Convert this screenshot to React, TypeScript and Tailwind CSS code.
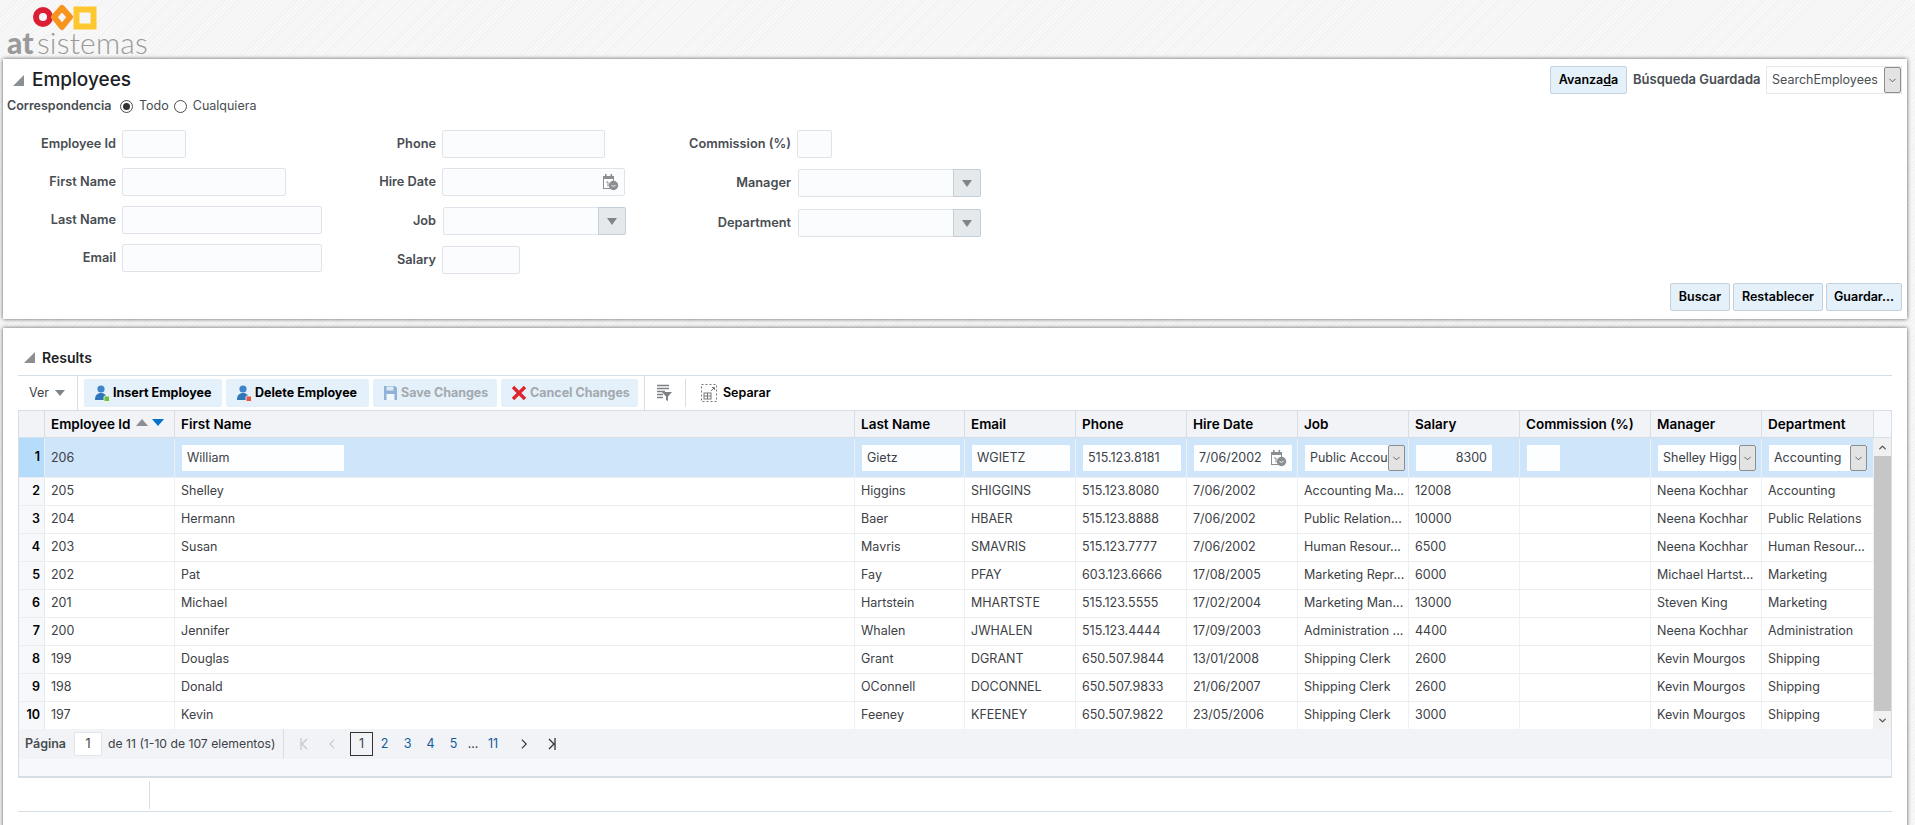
import { ChevronDown, ChevronUp } from 'lucide-react';

const rows = [
  ['205', 'Shelley', 'Higgins', 'SHIGGINS', '515.123.8080', '7/06/2002', 'Accounting Ma...', '12008', '', 'Neena Kochhar', 'Accounting'],
  ['204', 'Hermann', 'Baer', 'HBAER', '515.123.8888', '7/06/2002', 'Public Relation...', '10000', '', 'Neena Kochhar', 'Public Relations'],
  ['203', 'Susan', 'Mavris', 'SMAVRIS', '515.123.7777', '7/06/2002', 'Human Resour...', '6500', '', 'Neena Kochhar', 'Human Resour...'],
  ['202', 'Pat', 'Fay', 'PFAY', '603.123.6666', '17/08/2005', 'Marketing Repr...', '6000', '', 'Michael Hartst...', 'Marketing'],
  ['201', 'Michael', 'Hartstein', 'MHARTSTE', '515.123.5555', '17/02/2004', 'Marketing Man...', '13000', '', 'Steven King', 'Marketing'],
  ['200', 'Jennifer', 'Whalen', 'JWHALEN', '515.123.4444', '17/09/2003', 'Administration ...', '4400', '', 'Neena Kochhar', 'Administration'],
  ['199', 'Douglas', 'Grant', 'DGRANT', '650.507.9844', '13/01/2008', 'Shipping Clerk', '2600', '', 'Kevin Mourgos', 'Shipping'],
  ['198', 'Donald', 'OConnell', 'DOCONNEL', '650.507.9833', '21/06/2007', 'Shipping Clerk', '2600', '', 'Kevin Mourgos', 'Shipping'],
  ['197', 'Kevin', 'Feeney', 'KFEENEY', '650.507.9822', '23/05/2006', 'Shipping Clerk', '3000', '', 'Kevin Mourgos', 'Shipping'],
];

const headers = ['Employee Id', 'First Name', 'Last Name', 'Email', 'Phone', 'Hire Date', 'Job', 'Salary', 'Commission (%)', 'Manager', 'Department'];

const gridCols = 'grid grid-cols-[26px_130px_680px_110px_111px_111px_111px_111px_111px_131px_111px_112px]';

function Logo() {
  return (
    <div className="h-[59px] pl-[7px] pt-[4px]">
      <svg width="100" height="30" viewBox="0 0 100 30" className="ml-[24px] block">
        <circle cx="12" cy="13" r="7" fill="none" stroke="#dc1e35" strokeWidth="6" />
        <path d="M31 4 L39 13 L31 23 L23 13 Z" fill="none" stroke="#f7941d" strokeWidth="6" strokeLinejoin="round" />
        <rect x="45.5" y="5.5" width="17" height="17" fill="none" stroke="#fdc82f" strokeWidth="6" />
      </svg>
      <div className="font-['Lato',sans-serif] text-[30px] leading-[24px] text-[#9a9a9a] -mt-[4px] tracking-[0.2px] whitespace-nowrap">
        <span className="font-black">at</span>
        <span className="font-light ml-[3px]">sistemas</span>
      </div>
    </div>
  );
}

function TextBox({ width, icon }: { width: string; icon?: boolean }) {
  return (
    <div className={`${width} h-[28px] bg-[#fbfcfe] border border-[#dfe4ea] rounded-[2px] flex items-center justify-end pr-[5px]`}>
      {icon && <CalendarIcon />}
    </div>
  );
}

function CalendarIcon() {
  return (
    <svg width="17" height="18" viewBox="0 0 17 18">
      <rect x="1.5" y="3.5" width="10" height="12" fill="#fff" stroke="#8a8f94" />
      <rect x="1" y="3" width="11" height="3" fill="#8a8f94" />
      <rect x="3" y="1" width="1.6" height="3" fill="#8a8f94" />
      <rect x="8.5" y="1" width="1.6" height="3" fill="#8a8f94" />
      <path d="M4 9h2v4.5" fill="none" stroke="#8a8f94" />
      <circle cx="11.5" cy="12.5" r="4.7" fill="#8a8f94" />
      <path d="M9.5 12.5l2 .8 2-1" fill="none" stroke="#fff" strokeWidth="0.9" />
    </svg>
  );
}

function Combo({ width = 'w-[183px]' }: { width?: string }) {
  return (
    <div className={`${width} h-[28px] bg-[#fbfcfe] border border-[#dfe4ea] rounded-[2px] flex justify-end`}>
      <div className="w-[28px] -my-px -mr-px bg-[#e6e9ec] border border-[#c4ced7] rounded-r-[2px] flex items-center justify-center">
        <div className="w-0 h-0 border-l-[5px] border-r-[5px] border-t-[7px] border-l-transparent border-r-transparent border-t-[#7e858b]" />
      </div>
    </div>
  );
}

function Field({ label, labelWidth, children, className = '' }: { label: string; labelWidth: string; children: React.ReactNode; className?: string }) {
  return (
    <div className={`flex items-center gap-[6px] ${className}`}>
      <label className={`${labelWidth} text-right font-semibold text-[12.75px] text-[#484d52] whitespace-nowrap`}>{label}</label>
      {children}
    </div>
  );
}

function Radio({ checked }: { checked?: boolean }) {
  return (
    <span className="w-[13px] h-[13px] rounded-full border border-[#4a4a4a] bg-white flex items-center justify-center">
      {checked && <span className="w-[7px] h-[7px] rounded-full bg-[#333]" />}
    </span>
  );
}

function PanelButton({ width, children }: { width: string; children: React.ReactNode }) {
  return (
    <button className={`${width} h-[28px] bg-[#e4f0fa] border border-[#c4d0da] rounded-[2px] font-semibold text-[12.5px] text-black`}>
      {children}
    </button>
  );
}

function UserIcon({ badge }: { badge: string }) {
  return (
    <svg width="16" height="18" viewBox="0 0 16 18" className="shrink-0">
      <circle cx="7" cy="5" r="3.6" fill="#3f86c9" />
      <path d="M1 16c0-5 2.5-7 6-7s6 2 6 7z" fill="#2f75b8" />
      <rect x="10" y="12" width="5.5" height="5.5" rx="1" fill={badge} stroke="#fff" strokeWidth="0.8" />
    </svg>
  );
}

function SaveIcon() {
  return (
    <svg width="15" height="16" viewBox="0 0 15 16" className="shrink-0">
      <path d="M1 1h11l2 2v12H1z" fill="#8fb2d8" />
      <rect x="3.5" y="1.5" width="7" height="4" fill="#dfe9f3" />
      <rect x="3.5" y="9" width="8" height="6" fill="#f2f6fa" />
    </svg>
  );
}

function CancelIcon() {
  return (
    <svg width="16" height="16" viewBox="0 0 16 16" className="shrink-0">
      <path d="M2 2l12 12M14 2L2 14" stroke="#e0262d" strokeWidth="3.4" />
    </svg>
  );
}

function ToolButton({ width, disabled, icon, children }: { width: string; disabled?: boolean; icon: React.ReactNode; children: React.ReactNode }) {
  return (
    <button className={`${width} h-[28px] bg-[#e4f0fa] rounded-[2px] flex items-center gap-[3px] pl-[10px] font-bold text-[12.5px] whitespace-nowrap ${disabled ? 'text-[#a3a9ae]' : 'text-black'}`}>
      {icon}
      {children}
    </button>
  );
}

function FilterIcon() {
  return (
    <svg width="16" height="18" viewBox="0 0 16 18">
      <path d="M1 1.5h12M1 4.5h12M1 7.5h8M1 10.5h6M1 13.5h6" stroke="#7b8186" strokeWidth="1.4" />
      <path d="M6 8h10l-4 4.5V17l-2-1v-3.5z" fill="#7b8186" />
    </svg>
  );
}

function DetachIcon() {
  return (
    <svg width="16" height="18" viewBox="0 0 16 18">
      <rect x="0.5" y="0.5" width="15" height="17" fill="none" stroke="#777" strokeDasharray="2 2" />
      <rect x="3" y="9" width="7" height="6" fill="none" stroke="#777" />
      <path d="M3 12h7M6.5 9v6M10 7l3-3M11 3.5h2.5V6" stroke="#777" fill="none" />
    </svg>
  );
}

function PagerIcon({ d, color, width }: { d: string; color: string; width: string }) {
  return (
    <svg viewBox="0 0 8 12" className={`${width} h-[12px] shrink-0`} fill="none" stroke={color} strokeWidth="1.3">
      <path d={d} />
    </svg>
  );
}

function CellInput({ width, value, right }: { width: string; value: string; right?: boolean }) {
  return (
    <div className={`${width} h-[26px] bg-[#fdfeff] flex items-center px-[5px] whitespace-nowrap ${right ? 'justify-end' : ''}`}>
      {value}
    </div>
  );
}

function CellSelect({ value }: { value: string }) {
  return (
    <div className="w-[98px] h-[26px] bg-[#fdfeff] flex items-center pl-[5px] whitespace-nowrap justify-between">
      <span>{value}</span>
      <span className="w-[17px] h-[26px] shrink-0 bg-[#e3e3e3] border border-[#8d8d8d] rounded-[2px] flex items-center justify-center">
        <ChevronDown size={11} color="#555" />
      </span>
    </div>
  );
}

function EditCell({ children }: { children: React.ReactNode }) {
  return <div className="border-r border-[#eef1f4] pl-[7px] flex items-center">{children}</div>;
}

function ResultsTable() {
  return (
    <div className="border border-t-0 border-[#d6dfe6] border-b-2 w-[1874px] font-['Inter',sans-serif]">
      <div className="flex">
        <div className="w-[1855px] text-[12.5px] text-[#3c4146]">
          <div className={`${gridCols} h-[28px] bg-[#f1f3f7] border-t border-b border-[#d6dfe6] font-semibold text-[13.5px] text-black`}>
            <div className="border-r border-[#d6dfe6]" />
            {headers.map((h, i) => (
              <div key={h} className="border-r border-[#d6dfe6] pl-[6px] pt-px flex items-center whitespace-nowrap">
                {h}
                {i === 0 && (
                  <span className="flex items-center gap-[4px] ml-[6px] -mt-[5px]">
                    <span className="w-0 h-0 border-l-[6.5px] border-r-[6.5px] border-b-[7px] border-l-transparent border-r-transparent border-b-[#8a8f94]" />
                    <span className="w-0 h-0 border-l-[6.5px] border-r-[6.5px] border-t-[7px] border-l-transparent border-r-transparent border-t-[#0572ce]" />
                  </span>
                )}
              </div>
            ))}
          </div>
          <div className={`${gridCols} h-[39px] pt-px bg-[#cfe6fa]`}>
            <div className="bg-[#b5dcfa] -mt-px border-r border-[#e6edf3] flex items-center justify-end pr-[4px] font-semibold text-black">1</div>
            <div className="border-r border-[#eef1f4] pl-[6px] flex items-center">206</div>
            <EditCell><CellInput width="w-[162px]" value="William" /></EditCell>
            <EditCell><CellInput width="w-[98px]" value="Gietz" /></EditCell>
            <EditCell><CellInput width="w-[98px]" value="WGIETZ" /></EditCell>
            <EditCell><CellInput width="w-[98px]" value="515.123.8181" /></EditCell>
            <EditCell>
              <div className="w-[98px] h-[26px] bg-[#fdfeff] flex items-center justify-between px-[5px] whitespace-nowrap">
                7/06/2002
                <CalendarIcon />
              </div>
            </EditCell>
            <EditCell><CellSelect value="Public Accou" /></EditCell>
            <EditCell><CellInput width="w-[76px]" value="8300" right /></EditCell>
            <EditCell><CellInput width="w-[33px]" value="" /></EditCell>
            <EditCell><CellSelect value="Shelley Higg" /></EditCell>
            <EditCell><CellSelect value="Accounting" /></EditCell>
          </div>
          {rows.map((row, i) => (
            <div key={row[0]} className={`${gridCols} h-[28px] border-t border-[#ebedf0] bg-white`}>
              <div className="bg-[#f7f8fb] border-r border-[#e6e9ed] flex items-center justify-end pr-[4px] font-semibold text-black">{i + 2}</div>
              {row.map((cell, j) => (
                <div key={j} className="border-r border-[#eef1f4] pl-[6px] flex items-center whitespace-nowrap">
                  {cell}
                </div>
              ))}
            </div>
          ))}
        </div>
        <div className="w-[17px] flex flex-col">
          <div className="h-[28px] bg-[#f7f8fb] border-t border-b border-[#d6dfe6]" />
          <div className="flex-1 bg-[#f1f1f1] flex flex-col">
            <div className="h-[18px] flex items-center justify-center"><ChevronUp size={11} strokeWidth={3} color="#555" /></div>
            <div className="flex-1 bg-[#c6c6c6]" />
            <div className="h-[18px] flex items-center justify-center"><ChevronDown size={11} strokeWidth={3} color="#555" /></div>
          </div>
        </div>
      </div>
      <div className="h-[30px] bg-[#f1f3f6] flex items-center text-[12.5px] text-[#3c4146]">
        <span className="ml-[6px] font-semibold text-[#484d52]">Página</span>
        <div className="ml-[8px] w-[28px] h-[24px] bg-white border border-[#e1e5ea] rounded-[2px] flex items-center justify-center">1</div>
        <span className="ml-[6px] w-[175px] text-[12.2px] whitespace-nowrap">de 11 (1-10 de 107 elementos)</span>
        <div className="w-px h-[30px] bg-[#d6dfe6]" />
        <span className="ml-[16px]"><PagerIcon d="M1 0v12M7 1L2 6l5 5" color="#c5c9cd" width="w-[8px]" /></span>
        <span className="ml-[21px]"><PagerIcon d="M6 1L1 6l5 5" color="#c5c9cd" width="w-[7px]" /></span>
        <div className="ml-[14px] w-[23px] h-[24px] border border-[#333] flex items-center justify-center">1</div>
        <div className="flex items-center text-[#145c9e]">
          <span className="w-[23px] text-center">2</span>
          <span className="w-[23px] text-center">3</span>
          <span className="w-[23px] text-center">4</span>
          <span className="w-[23px] text-center">5</span>
          <span className="w-[16px] text-center text-[#3c4146]">...</span>
          <span className="w-[24px] text-center">11</span>
        </div>
        <span className="ml-[16px]"><PagerIcon d="M1 1l5 5-5 5" color="#333" width="w-[7px]" /></span>
        <span className="ml-[20px]"><PagerIcon d="M1 1l5 5-5 5M7 0v12" color="#333" width="w-[8px]" /></span>
      </div>
      <div className="h-[17px] bg-[#f7f8fb]" />
    </div>
  );
}

export default function App() {
  return (
    <div className="w-[1915px] h-[825px] overflow-hidden bg-[repeating-linear-gradient(135deg,#f2f2f2_0px,#f2f2f2_1px,#f8f8f8_1px,#f8f8f8_3px)] font-['Inter',sans-serif]">
      <Logo />
      <section className="ml-[3px] w-[1904px] h-[260px] bg-white shadow-[0_0_4px_rgba(0,0,0,0.65)] flex flex-col">
        <div className="flex justify-between pt-[7px] pr-[5px]">
          <div className="flex items-center">
            <span className="ml-[10px] w-0 h-0 border-b-[11px] border-l-[11px] border-b-[#8a8f94] border-l-transparent" />
            <h1 className="ml-[8px] text-[19px] font-medium text-[#1d2125] leading-none -mt-[1px]">Employees</h1>
          </div>
          <div className="flex items-center">
            <PanelButton width="w-[77px]">Avanza<span className="underline">d</span>a</PanelButton>
            <span className="ml-[6px] w-[133px] font-semibold text-[13px] text-[#484d52] whitespace-nowrap">Búsqueda Guardada</span>
            <div className="w-[136px] h-[28px] bg-white border border-[#e4e8ec] flex items-center justify-between pl-[5px] text-[12.5px] text-[#4a4f54]">
              <span>SearchEmployees</span>
              <span className="w-[17px] h-[26px] bg-[#e3e3e3] border border-[#8d8d8d] rounded-[2px] flex items-center justify-center">
                <ChevronDown size={11} color="#555" />
              </span>
            </div>
          </div>
        </div>
        <div className="flex items-center h-[24px] pl-[4px] text-[12.5px]">
          <span className="font-semibold text-[#484d52] w-[113px]">Correspondencia</span>
          <Radio checked />
          <span className="ml-[6px] text-[#484d52]">Todo</span>
          <span className="ml-[5px]"><Radio /></span>
          <span className="ml-[6px] text-[#484d52]">Cualquiera</span>
        </div>
        <div className="flex mt-[12px]">
          <div className="w-[319px] flex flex-col gap-[10px]">
            <Field label="Employee Id" labelWidth="w-[113px]"><TextBox width="w-[64px]" /></Field>
            <Field label="First Name" labelWidth="w-[113px]"><TextBox width="w-[164px]" /></Field>
            <Field label="Last Name" labelWidth="w-[113px]"><TextBox width="w-[200px]" /></Field>
            <Field label="Email" labelWidth="w-[113px]"><TextBox width="w-[200px]" /></Field>
          </div>
          <div className="w-[304px] flex flex-col gap-[10px]">
            <Field label="Phone" labelWidth="w-[114px]"><TextBox width="w-[163px]" /></Field>
            <Field label="Hire Date" labelWidth="w-[114px]"><TextBox width="w-[183px]" icon /></Field>
            <Field label="Job" labelWidth="w-[114px]" className="mt-[1px]"><span className="ml-px"><Combo /></span></Field>
            <Field label="Salary" labelWidth="w-[114px]" className="mt-[1px]"><TextBox width="w-[78px]" /></Field>
          </div>
          <div className="flex flex-col">
            <Field label="Commission (%)" labelWidth="w-[165px]"><TextBox width="w-[35px]" /></Field>
            <Field label="Manager" labelWidth="w-[165px]" className="mt-[11px]"><span className="ml-px"><Combo /></span></Field>
            <Field label="Department" labelWidth="w-[165px]" className="mt-[12px]"><span className="ml-px"><Combo /></span></Field>
          </div>
        </div>
        <div className="mt-auto mb-[8px] pr-[5px] flex justify-end gap-[3px]">
          <PanelButton width="w-[60px]">Buscar</PanelButton>
          <PanelButton width="w-[90px]">Restablecer</PanelButton>
          <PanelButton width="w-[76px]">Guardar...</PanelButton>
        </div>
      </section>
      <section className="ml-[3px] mt-[9px] w-[1904px] h-[520px] bg-white shadow-[0_0_4px_rgba(0,0,0,0.65)] px-[15px]">
        <div className="h-[48px] border-b border-[#d6dfe6] flex items-center pt-[12px]">
          <span className="ml-[6px] w-0 h-0 border-b-[11px] border-l-[11px] border-b-[#8a8f94] border-l-transparent" />
          <h2 className="ml-[7px] text-[14px] font-semibold text-[#1d2125]">Results</h2>
        </div>
        <div className="h-[34px] flex items-center">
          <span className="ml-[11px] text-[12.5px] text-[#3c4146]">Ver</span>
          <span className="ml-[6px] w-0 h-0 border-l-[5px] border-r-[5px] border-t-[6px] border-l-transparent border-r-transparent border-t-[#7e858b]" />
          <div className="ml-[12px] w-px h-[34px] bg-[#d6dfe6]" />
          <div className="ml-[6px] flex gap-[4px]">
            <ToolButton width="w-[138px]" icon={<UserIcon badge="#6cbf3b" />}>Insert Employee</ToolButton>
            <ToolButton width="w-[143px]" icon={<UserIcon badge="#e2574c" />}>Delete Employee</ToolButton>
            <ToolButton width="w-[124px]" disabled icon={<SaveIcon />}>Save Changes</ToolButton>
            <ToolButton width="w-[137px]" disabled icon={<CancelIcon />}>Cancel Changes</ToolButton>
          </div>
          <div className="ml-[6px] w-px h-[34px] bg-[#d6dfe6]" />
          <span className="ml-[11px]"><FilterIcon /></span>
          <div className="ml-[13px] w-px h-[28px] bg-[#d6dfe6]" />
          <span className="ml-[15px]"><DetachIcon /></span>
          <span className="ml-[6px] font-semibold text-[12.5px] text-black">Separar</span>
        </div>
        <ResultsTable />
        <div className="h-[34px] w-[1874px] border-b border-[#d6dfe6] pt-[3px]">
          <div className="ml-[131px] w-px h-[28px] bg-[#d6dfe6]" />
        </div>
      </section>
    </div>
  );
}
